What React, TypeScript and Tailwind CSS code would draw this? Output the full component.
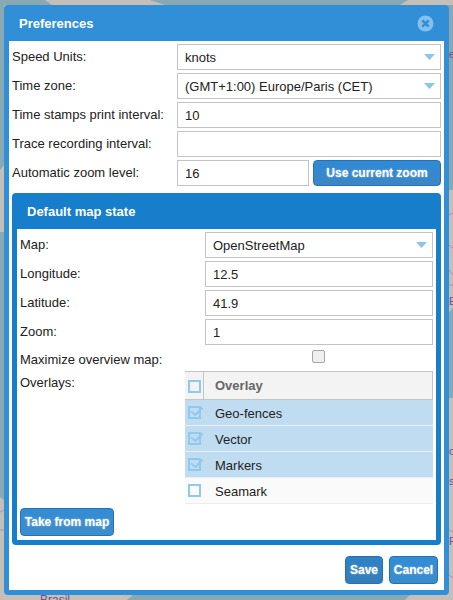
import type { ReactNode } from "react";

const font = "font-['Liberation_Sans',Arial,sans-serif]";

function Field({ value = "", select = false, className = "" }: { value?: string; select?: boolean; className?: string }) {
  return (
    <div className={`relative flex h-[26px] items-center border border-[#bdbdbd] outline outline-1 -outline-offset-1 outline-[#c4c4c4] bg-white pl-[7px] text-[13px] text-[#222222] ${className}`}>
      <span className="pt-[1px]">{value}</span>
      {select && (
        <svg className="absolute right-[5px] top-[9px]" width="11" height="6" viewBox="0 0 11 6">
          <path d="M0 0H11L5.5 6Z" fill="#8cc4ea" />
        </svg>
      )}
    </div>
  );
}

function Row({ label, labelWidth, children }: { label: string; labelWidth: string; children: ReactNode }) {
  return (
    <div className="flex h-[26px] items-center">
      <div className={`${labelWidth} shrink-0 whitespace-nowrap text-[13px] text-[#222222]`}>{label}</div>
      <div className="flex min-w-0 flex-1">{children}</div>
    </div>
  );
}

function Btn({ children, className = "" }: { children: ReactNode; className?: string }) {
  return (
    <button className={`flex items-center justify-center rounded-[4px] border border-[#2372b4] text-[12px] font-bold text-white [text-shadow:0_0_2px_rgba(255,255,255,0.55)] ${className}`}>
      {children}
    </button>
  );
}

function Check({ checked = false }: { checked?: boolean }) {
  return (
    <span className="relative block h-[13px] w-[13px] border-2 border-[#93c8ec]">
      {checked && (
        <svg className="absolute left-[-1px] top-[-3px]" width="15" height="14" viewBox="0 0 15 14">
          <path d="M2 6.5L6.5 10L13.5 2.5" stroke="#93c8ec" strokeWidth="2" fill="none" />
        </svg>
      )}
    </span>
  );
}

function TableRow({ name, checked }: { name: string; checked?: boolean }) {
  return (
    <div className={`flex h-[26px] items-center border-b ${checked ? "border-[#e4eff8] bg-[#c0dcf1]" : "border-[#ececec] bg-[#fafafa]"}`}>
      <div className="flex w-[16px] justify-end"><Check checked={checked} /></div>
      <div className="pl-[14px] pt-[3px] text-[13px] text-[#222222]">{name}</div>
    </div>
  );
}

function MapBackdrop() {
  return (
    <svg className="fixed inset-0" width="453" height="600" viewBox="0 0 453 600">
      <rect width="453" height="600" fill="#c4c0b8" />
      <path d="M0 0H45L52 5H0ZM150 0L165 5H400L408 0Z" fill="#89a9b2" />
      <path d="M0 5H4V165L0 170ZM0 232H4V500L0 497ZM445 5H453V190H445ZM449 312L453 308V398H449Z" fill="#89a9b2" />
      <path d="M127 600L133 595H410L405 600Z" fill="#89a9b2" />
      <path d="M449 215L453 213M449 245L453 248M449 270L453 275M449 285H453M449 530L453 532M449 575L453 578" stroke="#b48ab4" fill="none" />
      <path d="M0 512L4 510M0 530H4" stroke="#b48ab4" fill="none" />
      <text x="40" y="604" fontSize="12" fill="#7a4c86" fontFamily="Liberation Sans">Brasil</text>
      <text x="449" y="58" fontSize="11" fill="#7a4c86" fontFamily="Liberation Sans">e</text>
      <text x="449" y="305" fontSize="11" fill="#7a4c86" fontFamily="Liberation Sans">E</text>
      <text x="449" y="455" fontSize="11" fill="#7a4c86" fontFamily="Liberation Sans">o</text>
      <text x="449" y="485" fontSize="11" fill="#7a4c86" fontFamily="Liberation Sans">s</text>
      <text x="449" y="545" fontSize="11" fill="#7a4c86" fontFamily="Liberation Sans">P</text>
    </svg>
  );
}

export default function App() {
  return (
    <div className={`relative h-[600px] w-[453px] overflow-hidden ${font}`}>
      <MapBackdrop />
      <div className="absolute left-[4px] top-[5px] flex h-[590px] w-[445px] flex-col rounded-[4px] bg-[#318fd8] px-[5px] pb-[5px]">
        <div className="flex h-[36px] shrink-0 items-center justify-between pl-[10px] pr-[10px] pt-[1px]">
          <span className="text-[13px] font-bold text-white">Preferences</span>
          <svg width="17" height="17" viewBox="0 0 17 17" className="mt-[-1px]">
            <circle cx="8.5" cy="8.5" r="8" fill="#85c0ec" />
            <path d="M5.3 5.3L11.7 11.7M11.7 5.3L5.3 11.7" stroke="#318fd8" strokeWidth="2.6" />
          </svg>
        </div>
        <div className="flex min-h-0 flex-1 flex-col bg-white px-[3px] pt-[3px]">
          <div className="flex flex-col gap-[3px]">
            <Row label="Speed Units:" labelWidth="w-[165px]"><Field value="knots" select className="w-full" /></Row>
            <Row label="Time zone:" labelWidth="w-[165px]"><Field value="(GMT+1:00) Europe/Paris (CET)" select className="w-full" /></Row>
            <Row label="Time stamps print interval:" labelWidth="w-[165px]"><Field value="10" className="w-full" /></Row>
            <Row label="Trace recording interval:" labelWidth="w-[165px]"><Field className="w-full" /></Row>
            <Row label="Automatic zoom level:" labelWidth="w-[165px]">
              <Field value="16" className="w-[132px]" />
              <Btn className="ml-[4px] h-[26px] flex-1 bg-gradient-to-b from-[#2f8ad6] to-[#3b86c6]">Use current zoom</Btn>
            </Row>
          </div>
          <div className="mt-[7px] flex h-[352px] flex-col rounded-[4px] bg-[#167ecb] px-[5px] pb-[5px]">
            <div className="flex h-[36px] shrink-0 items-center pl-[10px] pt-[1px] text-[13px] font-bold text-white">Default map state</div>
            <div className="flex flex-1 flex-col bg-white px-[3px] pt-[3px]">
              <div className="flex flex-col gap-[3px]">
                <Row label="Map:" labelWidth="w-[185px]"><Field value="OpenStreetMap" select className="w-full" /></Row>
                <Row label="Longitude:" labelWidth="w-[185px]"><Field value="12.5" className="w-full" /></Row>
                <Row label="Latitude:" labelWidth="w-[185px]"><Field value="41.9" className="w-full" /></Row>
                <Row label="Zoom:" labelWidth="w-[185px]"><Field value="1" className="w-full" /></Row>
              </div>
              <div className="flex h-[26px] items-center">
                <div className="w-[185px] shrink-0 pt-[3px] text-[13px] text-[#222222]">Maximize overview map:</div>
                <div className="flex flex-1 -translate-y-[2px] justify-center">
                  <span className="-ml-[2px] block h-[13px] w-[13px] rounded-[2px] border border-[#a8a8a8] bg-[#efefef]" />
                </div>
              </div>
              <div className="flex">
                <div className="w-[165px] shrink-0 text-[13px] leading-[24px] text-[#222222]">Overlays:</div>
                <div className="flex-1">
                  <div className="flex h-[29px] items-stretch border-y border-r border-[#c4c4c4] bg-[#f3f3f3]">
                    <div className="flex w-[19px] shrink-0 items-center justify-end border-r border-[#c4c4c4] pr-[2px] pt-[2px]"><Check /></div>
                    <div className="flex items-center pl-[11px] pt-[1px] text-[13px] font-bold text-[#666666]">Overlay</div>
                  </div>
                  <TableRow name="Geo-fences" checked />
                  <TableRow name="Vector" checked />
                  <TableRow name="Markers" checked />
                  <TableRow name="Seamark" />
                </div>
              </div>
              <Btn className="mt-[4px] h-[28px] w-[94px] bg-gradient-to-b from-[#338cd4] to-[#3e8ccc]">Take from map</Btn>
            </div>
          </div>
          <div className="mt-[11px] flex justify-end gap-[6px] pr-[3px]">
            <Btn className="h-[28px] w-[38px] bg-gradient-to-b from-[#2f82c4] to-[#357db8]">Save</Btn>
            <Btn className="h-[28px] w-[49px] bg-gradient-to-b from-[#318dd6] to-[#3b8ccb]">Cancel</Btn>
          </div>
        </div>
      </div>
    </div>
  );
}
